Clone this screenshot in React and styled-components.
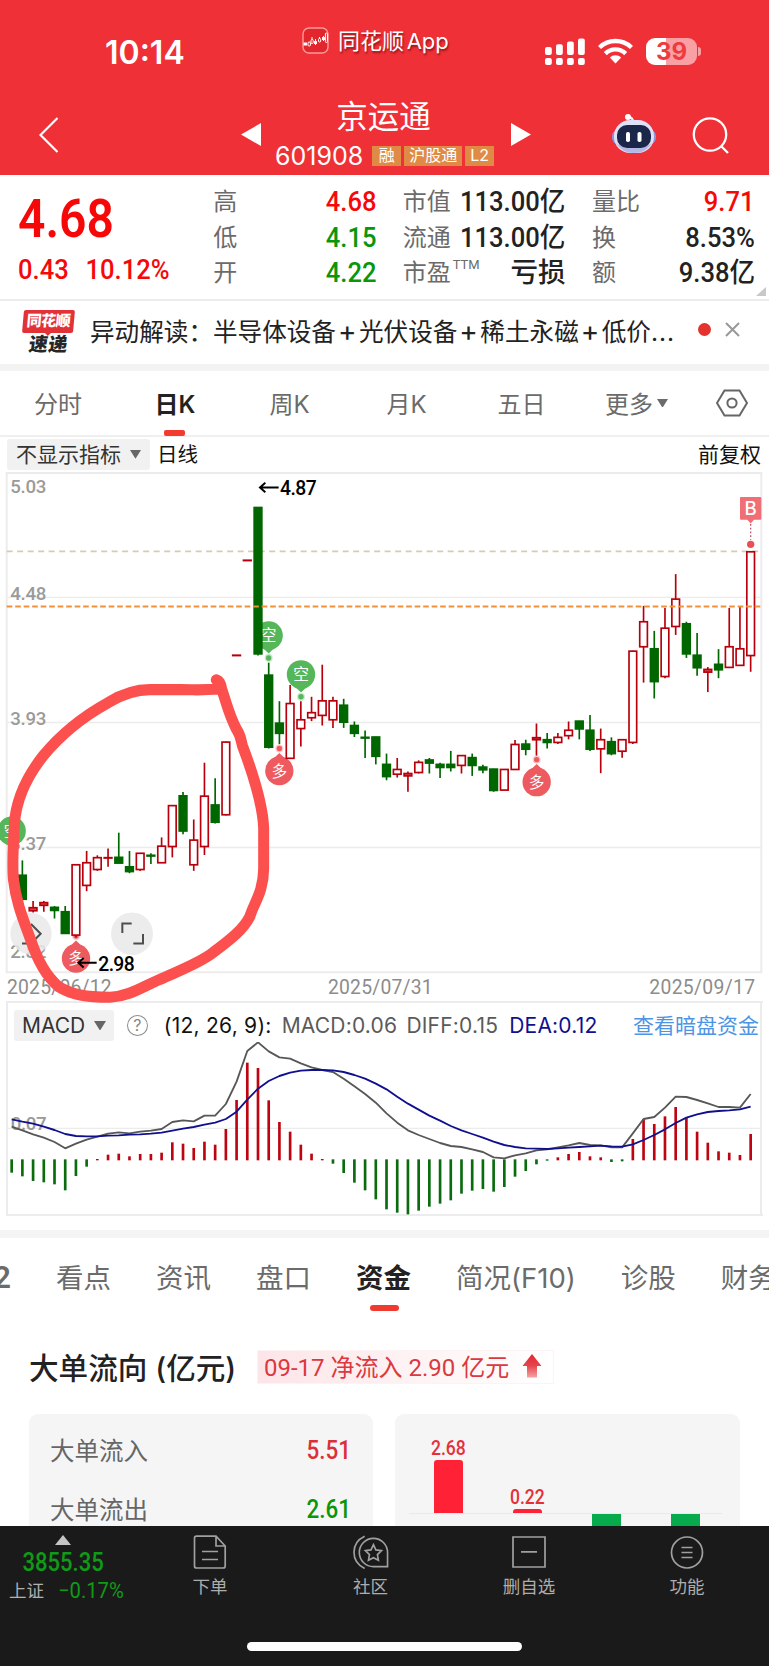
import styled, {createGlobalStyle, css} from 'styled-components';

const RED = '#f70808';
const GREEN = '#0a960a';

// [high, top, bottom, low, rising], in chart units from the top of the panel
const CANDLES = [
    null,
    [1155, 1198, 1270, 1273, 0], [1275, 1294, 1304, 1309, 1], [1275, 1279, 1288, 1307, 1],
    [1290, 1293, 1303, 1327, 0], [1290, 1306, 1371, 1371, 0], [1167, 1167, 1376, 1383, 1],
    [1127, 1161, 1229, 1246, 1], [1140, 1146, 1182, 1186, 1], [1120, 1146, 1148, 1174, 1],
    [1073, 1145, 1163, 1163, 0], [1127, 1173, 1188, 1193, 0], [1133, 1133, 1182, 1186, 1],
    [1134, 1139, 1142, 1166, 0], [1087, 1112, 1162, 1162, 1], [992, 992, 1114, 1146, 1],
    [953, 963, 1068, 1078, 0], [1034, 1094, 1168, 1186, 1], [866, 964, 1114, 1139, 1],
    [912, 990, 1042, 1046, 0], [804, 804, 1020, 1022, 1], [547, 547, 549, 549, 1],
    [266, 266, 268, 268, 1], [110, 110, 544, 549, 0], [570, 606, 820, 824, 0],
    [684, 748, 779, 811, 0], [636, 690, 853, 853, 1], [684, 738, 765, 818, 1],
    [671, 717, 733, 743, 1], [576, 682, 726, 756, 1], [671, 682, 739, 763, 1],
    [677, 695, 746, 763, 0], [744, 755, 779, 790, 0], [771, 790, 793, 852, 0],
    [789, 789, 847, 871, 0], [839, 870, 907, 918, 0], [852, 885, 900, 910, 1],
    [892, 897, 905, 952, 1], [859, 864, 895, 898, 1], [852, 857, 867, 898, 0],
    [866, 870, 880, 911, 0], [831, 870, 880, 892, 0], [844, 844, 874, 898, 1],
    [839, 850, 874, 905, 0], [872, 878, 887, 897, 0], [884, 884, 948, 952, 0],
    [885, 885, 947, 947, 1], [799, 811, 886, 886, 1], [798, 810, 826, 844, 0],
    [750, 791, 798, 845, 1], [778, 797, 806, 824, 0], [778, 790, 806, 811, 1],
    [744, 769, 786, 797, 1], [742, 742, 766, 797, 0], [725, 769, 826, 831, 0],
    [765, 797, 825, 897, 1], [791, 803, 839, 844, 0], [797, 797, 832, 851, 1],
    [535, 535, 806, 811, 1], [402, 448, 523, 629, 1], [476, 528, 626, 676, 0],
    [408, 467, 611, 616, 1], [308, 381, 463, 488, 1], [449, 454, 544, 556, 0],
    [482, 547, 585, 609, 0], [583, 589, 598, 657, 1], [530, 574, 591, 616, 0],
    [408, 522, 584, 584, 1], [402, 528, 578, 578, 1], [241, 241, 549, 597, 1],
];

const MACD = [
    548, 559, 573, 577, 583, 601, 558, 530, 507, 494, 491, 499, 492, 492, 488, 457, 461, 474, 455, 464, 417, 330, 218,
    234, 331, 396, 425, 464, 491, 507, 521, 549, 578, 601, 628, 658, 668, 673, 662, 650, 641, 631, 611, 602, 597, 605,
    591, 560, 543, 523, 512, 502, 492, 486, 499, 502, 516, 514, 447, 388, 402, 379, 351, 384, 425, 458, 484, 488, 495, 432,
];
const DIFF = [
    410, 421, 433, 443, 456, 475, 461, 449, 440, 431, 427, 430, 425, 422, 417, 396, 391, 394, 377, 377, 342, 275, 183,
    157, 184, 202, 206, 220, 232, 240, 246, 266, 289, 312, 338, 370, 398, 421, 435, 447, 459, 468, 471, 478, 486, 502,
    505, 496, 490, 481, 478, 472, 466, 459, 465, 466, 472, 472, 430, 387, 381, 353, 320, 321, 330, 340, 351, 351, 353, 312,
];
const DEA = [
    388, 395, 401, 410, 420, 432, 438, 439, 439, 437, 436, 434, 433, 431, 428, 422, 416, 411, 404, 398, 387, 365, 329,
    296, 273, 258, 248, 242, 240, 240, 241, 246, 255, 266, 281, 298, 320, 341, 359, 377, 392, 408, 421, 432, 443, 455,
    465, 471, 475, 476, 477, 475, 473, 471, 469, 467, 469, 470, 463, 450, 435, 418, 399, 383, 373, 366, 363, 361, 358, 350,
];

const xAt = (i) => 35 + 32.13 * i;
const toPoints = (values) => values.map((v, i) => `${xAt(i)},${v}`).join(' ');

const Candle = ({index, data: [high, top, bottom, low, rising]}) => {
    const x = xAt(index);
    const color = rising ? '#b8000c' : '#006600';
    return (
        <g stroke={color} strokeWidth="5">
            {low - high > 4 && <path d={`M${x} ${high}V${low}`}/>}
            <rect x={x - 11.5} y={top + 1} width="23" height={Math.max(bottom - top - 1, 1)}
                fill={rising ? (bottom - top < 12 ? '#d8464e' : '#fff') : color}/>
        </g>
    );
};

const Pin = ({x, y, up, label}) => {
    const color = up ? '#ed5a60' : '#56b65a';
    const d = up ? -1 : 1;
    return (
        <g fill={color}>
            <circle cx={x} cy={y} r="42.5"/>
            <path d={`M${x - 18} ${y + d * 36}L${x} ${y + d * 53}L${x + 18} ${y + d * 36}Z`}/>
            <circle cx={x} cy={y + d * 66} r="12" opacity=".3"/>
            <circle cx={x} cy={y + d * 66} r="8"/>
            <PinText x={x} y={y + 17}>{label}</PinText>
        </g>
    );
};

const KLineChart = () => (
    <ChartSvg width="769" height="531" viewBox="0 0 2307 1571" preserveAspectRatio="none">
        <g stroke="#ececec" strokeWidth="4" fill="none">
            <path d="M20 377H2284M20 747H2284M20 1117H2284"/>
            <rect x="20" y="9" width="2264" height="1477" strokeWidth="6"/>
        </g>
        {[['5.03', 67], ['4.48', 385], ['3.93', 755], ['3.37', 1124], ['2.82', 1443]].map(([text, y]) => (
            <AxisText key={text} x="31" y={y} textLength="108">{text}</AxisText>
        ))}
        <path d="M20 241H2284" stroke="#d8cbb0" strokeWidth="5" strokeDasharray="18 13.5"/>
        <Pin x={35} y={1068} label="空"/>
        <Pin x={806} y={490} label="空"/>
        <Pin x={903} y={605} label="空"/>
        <Pin x={838} y={890} label="多" up/>
        <Pin x={1610} y={923} label="多" up/>
        <Pin x={228} y={1445} label="多" up/>
        {CANDLES.map((data, i) => data && <Candle key={i} index={i} data={data}/>)}
        <path d="M20 404H2284" stroke="#f0923c" strokeWidth="6" strokeDasharray="17 8.5"/>
        <g fill="#f06e76">
            <path d="M2223 80H2281Q2284 80 2284 83V144Q2284 147 2281 147H2262L2252 158L2242 147H2223Q2220 147 2220 144V83Q2220 80 2223 80Z"/>
            <path d="M2252 160V206" stroke="#b56078" strokeWidth="4" strokeDasharray="5 6"/>
            <circle cx="2252" cy="220" r="11" fill="#ea4f58"/>
            <FlagText x="2252" y="134">B</FlagText>
        </g>
        <g fill="none" stroke="#000" strokeWidth="6">
            <path d="M836 52H780M796 38L780 52L796 66"/>
            <path d="M290 1458H235M251 1444L235 1458L251 1472"/>
        </g>
        <PriceText x="840" y="74" textLength="110">4.87</PriceText>
        <PriceText x="295" y="1481" textLength="109">2.98</PriceText>
        <g fill="#e9e9e9" fillOpacity=".85">
            <circle cx="93" cy="1372" r="62"/>
            <circle cx="396" cy="1372" r="63"/>
        </g>
        <g fill="none" stroke="#4d4d4d" strokeWidth="6">
            <path d="M93 1343L122 1372L93 1401M93 1401H66"/>
            <path d="M367 1370V1342H395M429 1373V1401H400"/>
        </g>
        <DateText x="21" y="1549" textLength="314">2025/06/12</DateText>
        <DateText x="984" y="1549" textLength="314">2025/07/31</DateText>
        <DateText x="1948" y="1549" textLength="317">2025/09/17</DateText>
        <path
            d="M655 648C610 652 590 650 540 650H450C400 650 355 670 325 688C240 734 180 785 130 845C90 895 48 965 43 1050C40 1110 36 1160 40 1210C48 1280 72 1335 92 1390C112 1450 135 1495 175 1528C215 1553 260 1559 330 1560C390 1557 430 1527 480 1507C540 1480 600 1458 640 1427C690 1390 730 1360 750 1320C762 1280 790 1250 791 1180V1060C788 980 750 875 727 815C722 795 722 785 710 768C685 720 680 690 665 648C663 632 659 624 649 621"
            fill="none" stroke="#fc504f" strokeWidth="33" strokeLinecap="round" strokeLinejoin="round"/>
    </ChartSvg>
);

const MacdChart = () => (
    <svg width="769" height="174" viewBox="0 156 2307 522">
        <path d="M20 415H2284" stroke="#ececec" strokeWidth="4"/>
        <AxisText x="32" y="421" textLength="108">0.07</AxisText>
        {MACD.map((v, i) => (
            <path key={i} d={`M${xAt(i)} ${v < 509 ? 511 : 508}V${v}`} strokeWidth="8"
                stroke={v < 509 ? '#bd0410' : '#0a6b0f'}/>
        ))}
        <g fill="none" strokeWidth="5.5" strokeLinejoin="round">
            <polyline points={toPoints(DIFF)} stroke="#575757"/>
            <polyline points={toPoints(DEA)} stroke="#10108e"/>
        </g>
    </svg>
);

const AppLogo = () => (
    <svg width="27" height="27" viewBox="0 0 27 27" fill="none">
        <rect x="1" y="1" width="25" height="25" rx="6" stroke="#fb9a9a" strokeWidth="1.4" fill="#e3262c"/>
        <path d="M1.5 17H5" stroke="#fff" strokeWidth="3"/>
        <path d="M12 15.5H15M20 11.5H23" stroke="#fff" strokeWidth="3"/>
        <g stroke="#fff" strokeWidth="1">
            <path d="M10 10V12.5M13.5 12V18M17.5 10V12M21.5 9V14"/>
            <rect x="6" y="15" width="2.4" height="4" rx="1"/>
            <rect x="9" y="12.5" width="2.2" height="4" rx="1"/>
            <rect x="16.5" y="11.5" width="2.2" height="3.5" rx="1"/>
            <rect x="23.4" y="6" width="2" height="9.5" rx="1"/>
        </g>
    </svg>
);

const Signal = () => (
    <svg width="40" height="28" viewBox="0 0 40 28" fill="#fff">
        {[0, 1, 2, 3].map((i) => (
            <g key={i}>
                <rect x={i * 11} y={9 - i * 2.8} width="6.8" height={8 + i * 2.8} rx="2"/>
                <rect x={i * 11} y="20" width="6.8" height="7" rx="2"/>
            </g>
        ))}
    </svg>
);

const Wifi = () => (
    <svg width="35" height="26" viewBox="0 0 35 26" fill="none" stroke="#fff" strokeWidth="4.4">
        <path d="M1.5 9.5A23 23 0 0 1 33.5 9.5M7.3 15.6A14.5 14.5 0 0 1 27.7 15.6"/>
        <path d="M17.5 25.5L11.8 19.6A8 8 0 0 1 23.2 19.6Z" fill="#fff" stroke="none"/>
    </svg>
);

const Robot = () => (
    <svg width="44" height="40" viewBox="0 0 44 40">
        <path d="M21 8Q21 3 16 3" stroke="#e9e9f8" strokeWidth="2.4" fill="none"/>
        <circle cx="16" cy="3" r="3" fill="#fff"/>
        <rect x="0" y="16" width="44" height="14" rx="6" fill="#8f93d8"/>
        <rect x="2" y="6" width="40" height="33" rx="16" fill="#dfe1f6"/>
        <path d="M4 29Q10 39 22 39T40 29Q34 34 22 34T4 29Z" fill="#b4b8e6"/>
        <rect x="5" y="11" width="34" height="23" rx="10" fill="#1b2748"/>
        <rect x="14" y="18" width="4" height="10" rx="1.8" fill="#fff"/>
        <rect x="25.5" y="18" width="4" height="10" rx="1.8" fill="#fff"/>
    </svg>
);

const Arrow = ({size = 10}) => (
    <svg width={size} height={size * 0.8} viewBox="0 0 10 8"><path d="M0 0H10L5 8Z" fill="currentColor"/></svg>
);

const FooterIcons = {
    order: <path d="M3.5 1.2H23L32.2 11V31Q32.2 33 30.2 33H3.5Q1.5 33 1.5 31V3.2Q1.5 1.2 3.5 1.2ZM23 1.2V11H32M9 16.5H25M9 24.5H25"/>,
    community: (
        <>
            <path d="M21 3A14.5 14.5 0 0 0 21 32H35.5V17.5A14.5 14.5 0 0 0 21 3Z"/>
            <path d="M12 .8Q1 6 1 17.3T12 34"/>
            <path d="M21 9.5L23.5 14.8L29.3 15.6L25.1 19.7L26.1 25.5L21 22.8L15.9 25.5L16.9 19.7L12.7 15.6L18.5 14.8Z"/>
        </>
    ),
    remove: <path d="M1 2H33V32H1ZM9 16.8H25"/>,
    more: <path d="M17 2A15.5 15.5 0 1 0 17 33A15.5 15.5 0 1 0 17 2ZM11.5 12.5H22.5M11.5 17.5H22.5M11.5 22.5H22.5"/>,
};

const QUOTE_COLUMNS = [
    [['高', '4.68', RED], ['低', '4.15', GREEN], ['开', '4.22', GREEN]],
    [['市值', '113.00亿'], ['流通', '113.00亿'], ['市盈', '亏损', '#222', 'TTM']],
    [['量比', '9.71', RED], ['换', '8.53%'], ['额', '9.38亿']],
];

const PERIODS = [['分时', 116], ['日K', 118, true], ['周K', 111], ['月K', 123], ['五日', 107], ['更多', 123]];
const SECTIONS = [['看点'], ['资讯'], ['盘口'], ['资金', true], ['简况(F10)'], ['诊股'], ['财务']];
const FOOTER = [['下单', 'order', 160], ['社区', 'community', 161], ['删自选', 'remove', 156], ['功能', 'more', 160]];

export default function App() {
    return (
        <Page>
            <GlobalStyle/>
            <Header>
                <StatusBar>
                    <Clock>10:14</Clock>
                    <AppName><AppLogo/><span>同花顺 App</span></AppName>
                    <StatusIcons>
                        <Signal/>
                        <Wifi/>
                        <Battery>39</Battery>
                    </StatusIcons>
                </StatusBar>
                <TitleBar>
                    <svg width="20" height="36" viewBox="0 0 20 36" fill="none" stroke="#fff" strokeWidth="2.2"><path d="M18.5 1L1.5 18L18.5 35"/></svg>
                    <StockSwitch>
                        <svg width="20" height="23"><path d="M20 0V23L0 11.5Z" fill="#fff"/></svg>
                        <Stock>
                            <StockName>京运通</StockName>
                            <StockCode>601908 <Tag $w={29}>融</Tag><Tag $w={58}>沪股通</Tag><Tag $w={29}>L2</Tag></StockCode>
                        </Stock>
                        <svg width="20" height="23"><path d="M0 0V23L20 11.5Z" fill="#fff"/></svg>
                    </StockSwitch>
                    <HeaderActions>
                        <Robot/>
                        <svg width="37" height="37" viewBox="0 0 37 37" fill="none" stroke="#fff" strokeWidth="2.3"><circle cx="18" cy="17.5" r="16.2"/><path d="M29.5 29.5L36 36"/></svg>
                    </HeaderActions>
                </TitleBar>
            </Header>

            <Quote>
                <Latest>
                    <LastPrice>4.68</LastPrice>
                    <Change><span>0.43</span><span>10.12%</span></Change>
                </Latest>
                {QUOTE_COLUMNS.map((rows, i) => (
                    <QuoteColumn key={i}>
                        {rows.map(([label, value, color, sup]) => (
                            <QuoteRow key={label}>
                                <QuoteLabel>{label}{sup && <sup>{sup}</sup>}</QuoteLabel>
                                <QuoteValue $color={color} $wide={Boolean(sup)}>{value}</QuoteValue>
                            </QuoteRow>
                        ))}
                    </QuoteColumn>
                ))}
                <Corner/>
            </Quote>

            <News>
                <NewsLogo><NewsBrand>同花顺</NewsBrand><NewsExpress>速递</NewsExpress></NewsLogo>
                <NewsText>异动解读：半导体设备<i>+</i>光伏设备<i>+</i>稀土永磁<i>+</i>低价<b>...</b></NewsText>
                <Dot/>
                <svg width="15" height="15" viewBox="0 0 15 15" stroke="#999" strokeWidth="2"><path d="M1 1L14 14M14 1L1 14"/></svg>
            </News>

            <Periods>
                {PERIODS.map(([text, width, active]) => (
                    <Period key={text} $width={width} $active={active}>
                        {text}{text === '更多' && <Arrow size={11}/>}
                    </Period>
                ))}
                <svg width="32" height="28" viewBox="0 0 32 28" fill="none" stroke="#666" strokeWidth="2"><path d="M8.5 1.5H23.5L31 14L23.5 26.5H8.5L1 14Z"/><circle cx="16" cy="14" r="4.6"/></svg>
            </Periods>

            <IndicatorBar>
                <Chip><ChipText>不显示指标</ChipText><Arrow size={11}/></Chip>
                <ChipText>日线</ChipText>
                <Adjust>前复权</Adjust>
            </IndicatorBar>
            <KLineChart/>

            <MacdPanel>
                <MacdBar>
                    <Chip $macd>MACD<Arrow size={12}/></Chip>
                    <Help>?</Help>
                    <MacdParams>(12, 26, 9):</MacdParams>
                    <MacdValue $width={125}>MACD:0.06</MacdValue>
                    <MacdValue $width={103}>DIFF:0.15</MacdValue>
                    <MacdValue $width={124} $color="#10108e">DEA:0.12</MacdValue>
                    <DarkPool>查看暗盘资金</DarkPool>
                </MacdBar>
                <MacdChart/>
            </MacdPanel>

            <Sections>
                <Level2>2</Level2>
                {SECTIONS.map(([text, active]) => <Section key={text} $active={active}>{text}</Section>)}
            </Sections>

            <FlowHeader>
                <FlowTitle>大单流向 (亿元)</FlowTitle>
                <FlowBadge>
                    <span>09-17 净流入 2.90 亿元</span>
                    <svg width="20" height="24" viewBox="0 0 20 24">
                        <defs>
                            <linearGradient id="rise" x2="0" y2="1">
                                <stop stopColor="#e32630"/><stop offset=".5" stopColor="#e5454c"/><stop offset="1" stopColor="#f5a3a3"/>
                            </linearGradient>
                        </defs>
                        <path d="M10 0L19.5 12H15V23.5H5V12H.5Z" fill="url(#rise)"/>
                    </svg>
                </FlowBadge>
            </FlowHeader>
            <Cards>
                <Card>
                    <FlowRow $color="#dc3038">大单流入<b>5.51</b></FlowRow>
                    <FlowRow $color={GREEN}>大单流出<b>2.61</b></FlowRow>
                </Card>
                <Card>
                    <Bars>
                        <BarColumn><BarValue>2.68</BarValue><Bar $height={53}/></BarColumn>
                        <BarColumn><BarValue>0.22</BarValue><Bar $height={4}/></BarColumn>
                    </Bars>
                    <Bars $down>
                        <BarColumn/>
                        <BarColumn/>
                        <BarColumn><Bar $height={40} $down/></BarColumn>
                        <BarColumn><Bar $height={40} $down/></BarColumn>
                    </Bars>
                </Card>
            </Cards>

            <Footer>
                <FooterNav>
                    <Index>
                        <svg width="16" height="10"><path d="M8 0L16 10H0Z" fill="#c4c4c4"/></svg>
                        <IndexValue>3855.35</IndexValue>
                        <IndexChange><em>上证</em><span>−0.17%</span></IndexChange>
                    </Index>
                    {FOOTER.map(([text, icon, width]) => (
                        <FooterItem key={text} $width={width}>
                            <svg width="36" height="35" viewBox={icon === 'community' ? '0 0 37 35' : '0 0 34 35'} fill="none" stroke="#a0a0a0" strokeWidth="1.7">{FooterIcons[icon]}</svg>
                            {text}
                        </FooterItem>
                    ))}
                </FooterNav>
                <HomeBar/>
            </Footer>
        </Page>
    );
}

const GlobalStyle = createGlobalStyle`
  body {
    margin: 0;
    background: #fff;
  }

  * {
    box-sizing: border-box;
  }

  svg {
    display: block;
    flex: none;
  }
`;

const digits = css`
  font-family: Roboto, "Noto Sans CJK SC", sans-serif;
`;

const Page = styled.div`
  width: 769px;
  height: 1666px;
  display: flex;
  flex-direction: column;
  overflow: hidden;
  background: #fff;
  color: #222;
  font-family: Inter, "Noto Sans CJK SC", sans-serif;
  white-space: nowrap;

  > * {
    flex: none;
  }
`;

const Header = styled.header`
  height: 175px;
  background: #f03037;
  color: #fff;
`;

const StatusBar = styled.div`
  display: flex;
  height: 96px;
  padding: 27px 67px 0 105px;
`;

const Clock = styled.div`
  width: 197px;
  padding-top: 6px;
  font-size: 32px;
  line-height: 40px;
  font-weight: 600;
`;

const AppName = styled.div`
  display: flex;
  gap: 9px;
  width: 243px;
  font-size: 22px;
  line-height: 28px;
  word-spacing: -3.5px;
  text-shadow: 1px 2px 2px rgba(90, 0, 0, 0.6);
`;

const StatusIcons = styled.div`
  display: flex;
  align-items: flex-start;
  gap: 13px;
  padding-top: 11px;
`;

const Battery = styled.div`
  position: relative;
  width: 51px;
  height: 27px;
  border-radius: 9px;
  background: linear-gradient(90deg, #fff 39%, #f8a0a3 39%);
  color: #ef3a40;
  font-size: 24px;
  line-height: 27px;
  font-weight: 700;
  text-align: center;

  &::after {
    content: '';
    position: absolute;
    right: -4px;
    top: 9px;
    width: 3px;
    height: 9px;
    border-radius: 0 4px 4px 0;
    background: #f8a0a3;
  }
`;

const TitleBar = styled.div`
  display: flex;
  align-items: flex-start;
  height: 79px;
  padding: 0 39px;

  > svg {
    margin-top: 21px;
  }
`;

const StockSwitch = styled.div`
  display: flex;
  width: 291px;
  margin-left: 182px;

  > svg {
    margin-top: 27px;
  }
`;

const Stock = styled.div`
  width: 250px;
`;

const StockName = styled.div`
  height: 47px;
  padding-right: 5px;
  font-size: 31.5px;
  line-height: 42px;
  text-align: center;
`;

const StockCode = styled.div`
  display: flex;
  align-items: center;
  gap: 3px;
  height: 26px;
  padding-left: 14px;
  font-size: 25px;
  line-height: 25px;
`;

const Tag = styled.span`
  width: ${({$w}) => $w}px;
  height: 20px;
  background: #e08b45;
  font-size: 16px;
  line-height: 19px;
  text-align: center;

  &:first-of-type {
    margin-left: 6px;
  }
`;

const HeaderActions = styled.div`
  display: flex;
  gap: 36px;
  margin-left: 80px;
  padding-top: 18px;

  > svg + svg {
    margin-top: 3px;
  }
`;

const Quote = styled.section`
  display: flex;
  position: relative;
  height: 126px;
  gap: 26.5px;
  padding: 9px 14px 0 18px;
  border-bottom: 2px solid #ececec;
`;

const Latest = styled.div`
  ${digits}
  width: 169px;
  color: ${RED};
  font-weight: 500;
`;

// prices are set slightly condensed
const LastPrice = styled.div`
  height: 72px;
  padding-top: 9px;
  font-size: 54px;
  line-height: 52px;
  font-weight: 600;
  transform: scaleX(0.89);
  transform-origin: left;
`;

const Change = styled.div`
  display: flex;
  gap: 18px;
  font-size: 27.5px;
  line-height: 27px;
  transform: scaleX(0.93);
  transform-origin: left;
`;

const QuoteColumn = styled.div`
  width: 163.2px;
`;

const QuoteRow = styled.div`
  display: flex;
  justify-content: space-between;
  align-items: center;
  height: 35.5px;
`;

const QuoteLabel = styled.span`
  color: #6b6b6b;
  font-size: 24px;
  line-height: 35px;

  sup {
    font-family: Roboto, sans-serif;
    font-size: 13px;
    line-height: 1;
    vertical-align: 12px;
    margin-left: 2px;
  }
`;

const QuoteValue = styled.span`
  ${digits}
  color: ${({$color}) => $color || '#222'};
  font-size: 27.5px;
  line-height: 35px;
  font-weight: 500;
  transform: scaleX(${({$wide}) => ($wide ? 1 : 0.93)});
  transform-origin: right;
`;

const Corner = styled.i`
  position: absolute;
  right: 3px;
  bottom: 3px;
  border-left: 10px solid transparent;
  border-bottom: 9px solid #c8c8c8;
`;

const News = styled.section`
  display: flex;
  align-items: center;
  height: 70px;
  padding: 0 28px 6px 23px;
  border-bottom: 7px solid #f3f3f3;
`;

const NewsLogo = styled.div`
  width: 67px;
  padding-right: 16px;
  margin-top: 4px;
  text-align: center;
  font-weight: 900;
`;

const NewsBrand = styled.div`
  position: relative;
  height: 23px;
  border-radius: 2px;
  background: #e33237;
  color: #fff;
  font-size: 15px;
  line-height: 21px;
  letter-spacing: -0.5px;
  transform: skewX(-5deg);

  &::after {
    content: '';
    position: absolute;
    left: calc(50% - 4px);
    top: 22px;
    border: 4px solid transparent;
    border-top: 4px solid #e33237;
  }
`;

const NewsExpress = styled.div`
  height: 21px;
  color: #262626;
  font-size: 19px;
  line-height: 23px;
  letter-spacing: 0.5px;
  transform: skewX(-8deg);
`;

const NewsText = styled.div`
  width: 608px;
  font-size: 24.6px;

  i {
    display: inline-block;
    width: 23px;
    font-size: 28px;
    font-style: normal;
    line-height: 20px;
    text-align: center;
    text-indent: -0.5px;
  }

  b {
    font-weight: 400;
    letter-spacing: 1px;
  }
`;

const Dot = styled.i`
  width: 13px;
  height: 13px;
  margin-right: 14px;
  border-radius: 50%;
  background: #e5322d;
`;

const Periods = styled.nav`
  display: flex;
  align-items: center;
  height: 66px;
  border-bottom: 2px solid #efefef;
`;

const Period = styled.div`
  display: flex;
  align-items: center;
  justify-content: center;
  gap: 4px;
  position: relative;
  width: ${({$width}) => $width}px;
  height: 100%;
  padding-bottom: 2px;
  color: ${({$active}) => ($active ? '#222' : '#6b6b6b')};
  font-size: 24px;
  font-weight: ${({$active}) => ($active ? 600 : 400)};

  svg {
    margin-top: 2px;
  }

  &:last-of-type {
    margin: 0 18px 0 0;
  }

  &::after {
    content: '';
    display: ${({$active}) => ($active ? 'block' : 'none')};
    position: absolute;
    left: calc(50% - 11px);
    bottom: -1px;
    width: 21px;
    height: 6px;
    border-radius: 2px;
    background: #f23a2f;
  }
`;

const IndicatorBar = styled.div`
  display: flex;
  align-items: center;
  gap: 7px;
  height: 33px;
  padding: 2px 8px 0 7px;
  color: #111;
  font-size: 20.5px;
`;

const Chip = styled.div`
  display: flex;
  align-items: center;
  justify-content: space-between;
  width: ${({$macd}) => ($macd ? 100 : 143)}px;
  height: 31px;
  padding: 0 ${({$macd}) => ($macd ? 8 : 9)}px;
  border-radius: 3px;
  background: #f1f1f1;
  color: #333;
  font-size: 21px;

  svg {
    color: #666;
  }
`;

const ChipText = styled.span`
  padding-bottom: 3px;
`;

const Adjust = styled(ChipText)`
  margin-left: auto;
  font-size: 21px;
`;

// the marker stroke runs a little past the bottom edge, over the next panel
const ChartSvg = styled.svg`
  position: relative;
  z-index: 1;
  overflow: visible;
`;

const AxisText = styled.text`
  font: 500 56px Roboto, sans-serif;
  fill: #9a9a9a;
`;

const DateText = styled(AxisText)`
  font-weight: 400;
  font-size: 58px;
  fill: #8c8c8c;
`;

const PriceText = styled.text`
  font: 500 58px Roboto, sans-serif;
  fill: #000;
`;

const PinText = styled.text`
  font: 400 47px "Noto Sans CJK SC", sans-serif;
  fill: #fff;
  text-anchor: middle;
`;

const FlagText = styled.text`
  font: 500 56px Inter, sans-serif;
  fill: #fff;
  text-anchor: middle;
`;

const MacdPanel = styled.section`
  height: 237px;
  border-bottom: 8px solid #f4f4f4;
  background:
    linear-gradient(#ececec, #ececec) 6px 0 / 757px 2px no-repeat,
    linear-gradient(#ececec, #ececec) 6px 213px / 757px 2px no-repeat,
    linear-gradient(#ececec, #ececec) 6px 0 / 2px 215px no-repeat,
    linear-gradient(#ececec, #ececec) 760px 0 / 2px 215px no-repeat;
`;

const MacdBar = styled.div`
  display: flex;
  align-items: center;
  height: 41px;
  padding: 8px 10px 0 14px;
  font-size: 21px;
`;

const Help = styled.span`
  width: 21px;
  height: 21px;
  margin: 0 16px 0 13px;
  border: 1.6px solid #8a8a8a;
  border-radius: 50%;
  color: #888;
  font-size: 16px;
  line-height: 18px;
  text-align: center;
`;

const MacdParams = styled.span`
  width: 118px;
  color: #111;
  letter-spacing: 0.25px;
`;

const MacdValue = styled.span`
  width: ${({$width}) => $width}px;
  color: ${({$color}) => $color || '#5a5a5a'};
  letter-spacing: 0.2px;
`;

const DarkPool = styled.a`
  padding-bottom: 3px;
  color: #4d95e4;
  font-size: 21px;
`;

const Sections = styled.nav`
  display: flex;
  gap: 45px;
  height: 80px;
  color: #6b6b6b;
  font-size: 27.5px;
  line-height: 80px;
`;

const Level2 = styled.span`
  width: 12px;
  margin-left: -1px;
  direction: rtl;
  font-family: Roboto, sans-serif;
  font-size: 31px;
  font-weight: 600;
`;

const Section = styled.span`
  position: relative;
  color: ${({$active}) => ($active ? '#222' : 'inherit')};
  font-weight: ${({$active}) => ($active ? 600 : 400)};

  &::after {
    content: '';
    display: ${({$active}) => ($active ? 'block' : 'none')};
    position: absolute;
    left: calc(50% - 14px);
    top: 67px;
    width: 29px;
    height: 6px;
    border-radius: 3px;
    background: #f03a30;
  }
`;

const FlowHeader = styled.div`
  display: flex;
  align-items: center;
  height: 96px;
  padding: 2px 0 0 29px;
`;

const FlowTitle = styled.h2`
  width: 228px;
  margin: 0;
  padding-bottom: 1px;
  font-size: 29.6px;
  font-weight: 500;
`;

const FlowBadge = styled.div`
  ${digits}
  display: flex;
  align-items: center;
  justify-content: space-between;
  width: 297px;
  height: 34px;
  padding: 0 11px 3px 6px;
  border: 1px solid #fdf3f3;
  background: linear-gradient(90deg, #fce5e8, #fff);
  color: #dc3840;
  font-size: 24px;
`;

const Cards = styled.div`
  display: flex;
  gap: 22px;
  height: 112px;
  padding: 0 29px;
`;

const Card = styled.div`
  width: 345px;
  padding: 6px 23px 0 21px;
  border-radius: 9px 9px 0 0;
  background: #f5f5f5;
`;

const FlowRow = styled.div`
  display: flex;
  justify-content: space-between;
  align-items: center;
  height: 59px;
  color: #666;
  font-size: 24.5px;

  b {
    ${digits}
    color: ${({$color}) => $color};
    font-weight: 500;
    font-size: 25.5px;
    transform: translateX(1.5px) scaleX(0.88);
    transform-origin: right;
  }
`;

const Bars = styled.div`
  display: flex;
  align-items: ${({$down}) => ($down ? 'flex-start' : 'flex-end')};
  height: ${({$down}) => ($down ? 13 : 93)}px;
  overflow: hidden;
  margin: 0 -5px 0 -7px;
  border-top: ${({$down}) => ($down ? '1px solid #e9e9e9' : 'none')};
`;

const BarColumn = styled.div`
  display: flex;
  flex: none;
  flex-direction: column;
  align-items: center;
  gap: 1px;
  width: 79.1px;
`;

const BarValue = styled.span`
  ${digits}
  color: #e5303c;
  font-size: 19.5px;
  line-height: 20px;
  font-weight: 500;
  transform: scaleX(0.9);
`;

const Bar = styled.i`
  width: 29px;
  height: ${({$height}) => $height}px;
  border-radius: ${({$down}) => ($down ? 0 : '3px 3px 0 0')};
  background: ${({$down}) => ($down ? '#07ab4b' : '#ff2236')};
`;

const Footer = styled.footer`
  height: 140px;
  background: #1a1a1a;
`;

const FooterNav = styled.nav`
  display: flex;
  height: 116px;
  padding-left: 8px;
`;

const Index = styled.div`
  ${digits}
  display: flex;
  flex-direction: column;
  align-items: center;
  width: 122px;
  padding: 9px 12px 0 0;
  color: #0f9a18;
`;

const IndexValue = styled.div`
  font-size: 25px;
  line-height: 35px;
  font-weight: 500;
  transform: scaleX(0.88);
`;

const IndexChange = styled.div`
  display: flex;
  gap: 14px;
  align-self: flex-start;
  padding-left: 1px;
  font-size: 21.5px;
  line-height: 21px;

  em {
    color: #b0b0b0;
    font-size: 17.5px;
    font-style: normal;
    line-height: 22px;
  }

  span {
    transform: scaleX(0.94);
    transform-origin: left;
  }
`;

const FooterItem = styled.div`
  display: flex;
  flex-direction: column;
  align-items: center;
  gap: 4px;
  width: ${({$width}) => $width}px;
  padding-top: 9px;
  color: #adadad;
  font-size: 17.5px;
  line-height: 26px;
`;

const HomeBar = styled.div`
  width: 275px;
  height: 9px;
  margin: 0 auto;
  border-radius: 5px;
  background: #fff;
`;
